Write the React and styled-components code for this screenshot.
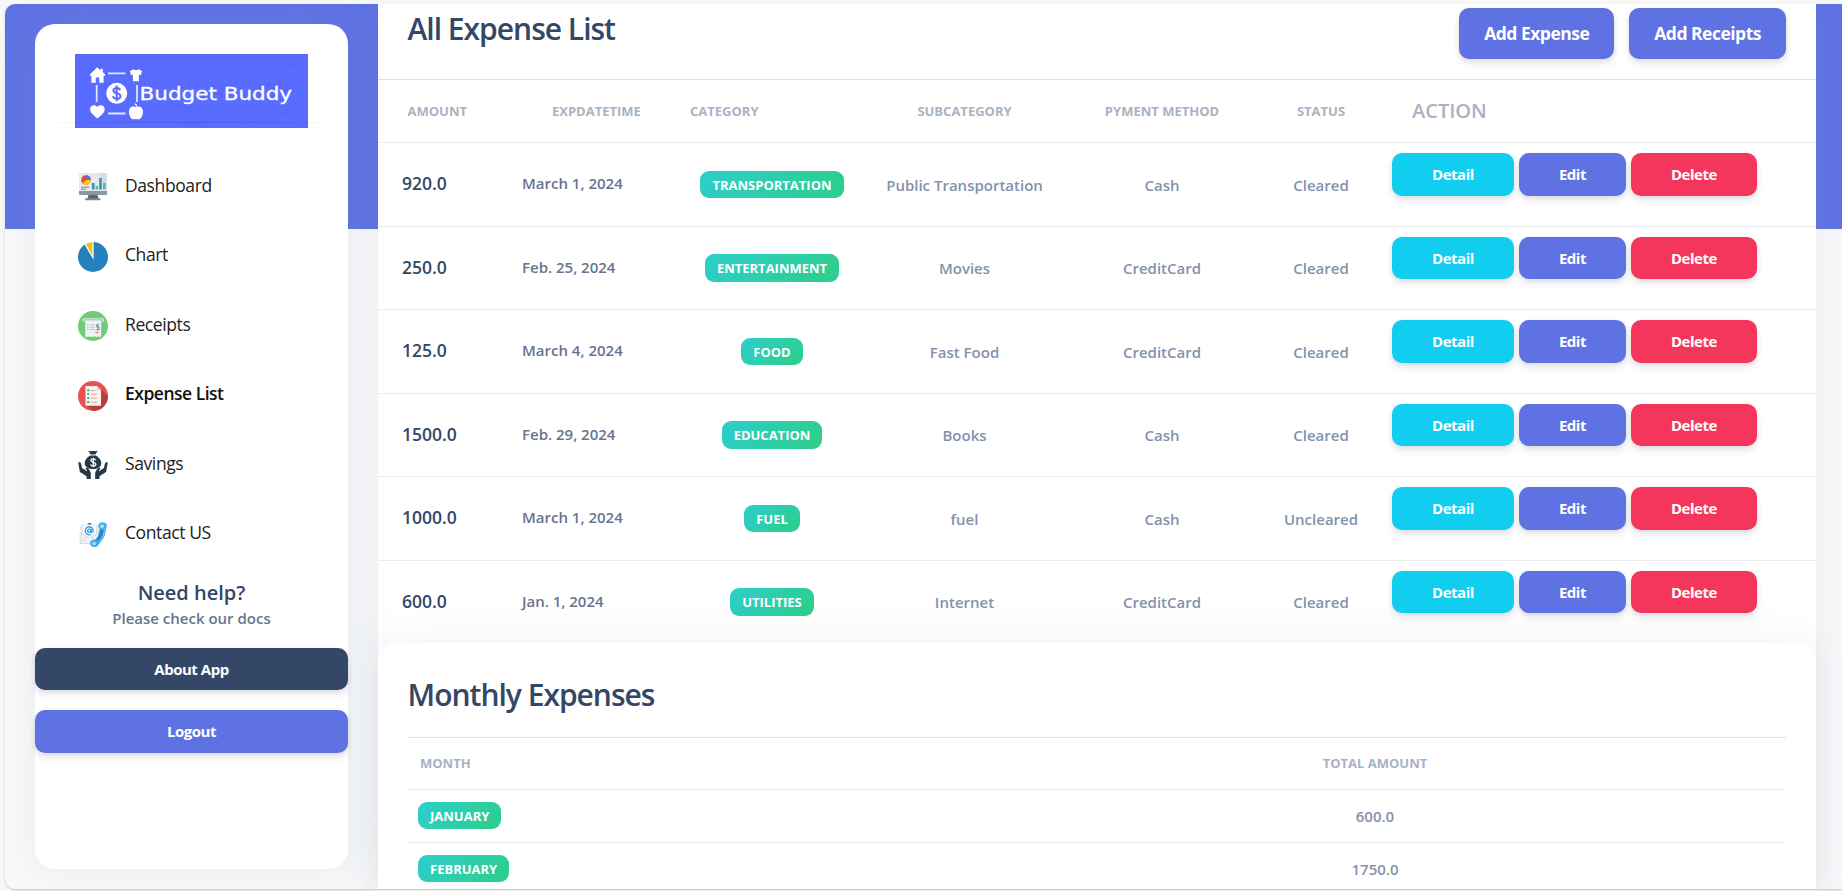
import React from "react";
import styled, { createGlobalStyle } from "styled-components";

const GlobalStyle = createGlobalStyle`
  *, *::before, *::after { box-sizing: border-box; }
  body {
    margin: 0;
    background: #f7f7f7;
    font-family: "Open Sans", "Noto Sans", sans-serif;
    overflow: hidden;
  }
`;

const Page = styled.div`
  height: 891px;
  padding: 4px 0 2px 5px;
`;

const Frame = styled.div`
  height: 885px;
  display: flex;
  gap: 30px;
  padding-left: 30px;
  overflow: hidden;
  border-radius: 10px 0 0 10px;
  background: linear-gradient(#5e72e4 225px, #f8f9fa 225px);
  box-shadow: 0 1px 2px rgba(0, 0, 0, 0.22);
`;

const Sidebar = styled.aside`
  position: relative;
  z-index: 1;
  flex: none;
  width: 313px;
  height: 845px;
  margin-top: 20px;
  padding-top: 30px;
  border-radius: 20px;
  background: #fff;
  box-shadow: 0 0 40px rgba(136, 152, 170, 0.15);
`;

const LogoBox = styled.div`
  width: 233px;
  height: 74px;
  margin: 0 auto;
  svg { display: block; }
`;

const Divider = styled.div`
  position: relative;
  height: 1px;
  margin-top: -6px;
  background: linear-gradient(90deg, transparent, rgba(0, 0, 0, 0.16), transparent);
`;

const Nav = styled.nav`
  margin-top: 26.75px;
  padding-bottom: 1px;
`;

const NavItem = styled.a`
  display: flex;
  align-items: center;
  gap: 17px;
  height: 69.5px;
  padding-left: 43px;
  font-size: 17.5px;
  letter-spacing: ${(p) => (p.$active ? "-0.5px" : "-0.4px")};
  font-weight: ${(p) => (p.$active ? 600 : 380)};
  color: ${(p) => (p.$active ? "#111" : "#222")};
  svg { flex: none; margin-top: 5px; }
`;

const Help = styled.div`
  padding: 12.5px 0 17.5px;
  text-align: center;
`;

const HelpTitle = styled.div`
  font-size: 20px;
  line-height: 25px;
  font-weight: 600;
  color: #344767;
`;

const HelpText = styled.div`
  margin-top: 1px;
  font-size: 15px;
  line-height: 24px;
  font-weight: 600;
  color: #67748e;
`;

const tones = { primary: "#5e72e4", info: "#11cdef", danger: "#f5365c", dark: "#344767" };

const Button = styled.button`
  display: block;
  width: ${(p) => (p.$block ? "100%" : "auto")};
  margin: 0;
  border: 0;
  border-radius: 10px;
  padding: ${(p) => (p.$large ? "11.5px 25px 13.5px" : "10px 40px")};
  font-family: inherit;
  font-size: ${(p) => (p.$large ? "17.5px" : "15px")};
  line-height: 1.5;
  font-weight: 700;
  letter-spacing: ${(p) => (p.$large ? "-0.5px" : "-0.47px")};
  white-space: nowrap;
  color: #fff;
  background: ${(p) => tones[p.$tone]};
  box-shadow: 0 5px 7.5px rgba(50, 50, 93, 0.1), 0 1px 4px rgba(0, 0, 0, 0.08);
`;

const SideActions = styled.div`
  display: grid;
  gap: 20px;
`;

const Main = styled.main`
  flex: none;
  width: 1438px;
  background: #fff;
  box-shadow: 0 0 40px rgba(136, 152, 170, 0.12);
`;

const CardHeader = styled.header`
  display: flex;
  align-items: flex-start;
  justify-content: space-between;
  height: 75px;
  padding: 4px 30px 0;
`;

const HeaderActions = styled.div`
  display: flex;
  gap: 15px;
`;

const Title = styled.h4`
  margin: 0 0 0 -0.5px;
  font-size: 30px;
  line-height: 41px;
  font-weight: 600;
  letter-spacing: -1px;
  color: #344767;
`;

const Row = styled.div`
  display: grid;
  grid-template-columns: 144px 146px 208px 177px 218px 100px 1fr;
  align-items: center;
  height: ${(p) => (p.$last ? "82.5px" : "83.5px")};
  border-bottom: ${(p) => (p.$last ? "0" : "1px solid #e9ecef")};
`;

const HeadRow = styled(Row)`
  height: 64px;
  border-top: 1px solid #dee2e6;
`;

const HeadCell = styled.div`
  padding-left: ${(p) => p.$inset || 0}px;
  padding-bottom: 1px;
  text-align: ${(p) => (p.$center ? "center" : "left")};
  font-size: ${(p) => (p.$big ? 20 : 13)}px;
  font-weight: ${(p) => (p.$big ? 600 : 700)};
  text-transform: uppercase;
  white-space: nowrap;
  color: #8392ab;
  opacity: 0.7;
`;

const Amount = styled.div`
  padding: 0 0 2px 24px;
  font-size: 17.5px;
  font-weight: 600;
  color: #344767;
`;

const DateCell = styled.div`
  padding-bottom: 2px;
  font-size: 15px;
  font-weight: 600;
  color: #67748e;
`;

const CenterCell = styled.div`
  padding-top: 0.5px;
  text-align: center;
  font-size: 15px;
  line-height: 22px;
  font-weight: 600;
  white-space: nowrap;
  color: #8392ab;
`;

const Badge = styled.span`
  display: inline-block;
  height: 27.5px;
  padding: 0 12px;
  border-radius: 9px;
  font-size: 13px;
  line-height: 28px;
  font-weight: 700;
  text-transform: uppercase;
  color: #fff;
  background: linear-gradient(310deg, #2dce89, #2dcecc);
`;

const Actions = styled.div`
  display: flex;
  align-self: start;
  gap: 5px;
  padding: 10px 0 0 21px;
`;

const MonthlyCard = styled.section`
  position: relative;
  height: 260px;
  padding: 30.5px 30px 0;
  border-radius: 20px 20px 0 0;
  background: #fff;
  box-shadow: 0 0 40px rgba(136, 152, 170, 0.15);
`;

const MonthRow = styled.div`
  display: grid;
  grid-template-columns: 556px 1fr;
  align-items: center;
  height: 53px;
  padding: 0 10px;
  border-bottom: 1px solid #e9ecef;
`;

const MonthHead = styled(MonthRow)`
  margin-top: 22px;
  border-top: 1px solid #dee2e6;
`;

const watermarkColumns = [22, 62, 102, 142, 182, 212];
const watermarkRows = [14, 36, 58];

const LogoMark = () => (
  <svg width="233" height="74" viewBox="0 0 233 74">
    <rect width="233" height="74" fill="#596cff" />
    <g fill="#20309a" opacity="0.06" fontFamily="Open Sans, sans-serif" fontSize="6.5" fontWeight="700">
      {watermarkRows.map((y) =>
        watermarkColumns.map((x) => (
          <text key={`${x}-${y}`} x={x} y={y + 2} textAnchor="middle" transform={`rotate(-28 ${x} ${y})`}>turbologo</text>
        ))
      )}
    </g>
    <g fill="#fff">
      <path d="M22.3 13.3 15 20.3v1.5h1.4v7h4.3v-5.2h3.6v5.2h4.3v-7H30v-1.5l-2.2-2v-3.5h-2.3v1.6z" />
      <path d="M58.5 15.3c1.6 1.4 3.6 1.4 5.1 0l3.4 1.8-1.1 4.1-2 -.6v6.6h-6v-6.6l-1.9.6-1.1-4.1z" />
      <path d="M22.4 64.5c-3.3-2.6-7.3-5.5-7.3-9.2 0-4.4 5.1-5.5 7.3-2.3 2.2-3.2 7.3-2.1 7.3 2.3 0 3.7-4 6.6-7.3 9.2z" />
      <path d="M61 53.2c1.4-1.1 7-1.4 7 4.7 0 3.6-2.1 7.4-4.4 7.4-1 0-1.6-.4-2.6-.4s-1.7.4-2.6.4c-2.4 0-4.4-3.8-4.4-7.4 0-6.1 5.7-5.8 7-4.7z" />
      <path d="M60 49.8c1.2.5 1.6 1.4 1.5 2.8" stroke="#fff" strokeWidth="1.2" />
      <circle cx="41.7" cy="39.3" r="10.5" />
    </g>
    <path d="M33 19.3h17.5M33 59.5h17.5M21.7 31v17M62 31v17" stroke="#fff" strokeOpacity=".82" strokeWidth="1.8" />
    <path d="M41.7 31.5v15.8M45.2 36.2c-.5-1.7-1.8-2.3-3.4-2.3-2 0-3.4 1-3.4 2.6 0 3.9 7.1 1.7 7.1 5.7 0 1.7-1.6 2.7-3.7 2.7-1.8 0-3.3-.8-3.8-2.6" fill="none" stroke="#596cff" strokeWidth="2" />
    <text x="64.6" y="46" textLength="152.5" lengthAdjust="spacingAndGlyphs" fontFamily="DejaVu Sans, sans-serif" fontSize="18.5" fill="#fff" stroke="#fff" strokeWidth=".3">Budget Buddy</text>
  </svg>
);

const Icon = ({ children }) => (
  <svg width="30" height="30" viewBox="0 0 30 30">{children}</svg>
);

const DashboardIcon = () => (
  <Icon>
    <path d="M10.5 23h9l1.2 4H9.300z" fill="#5d6672" />
    <rect x="7.2" y="26.2" width="15.4" height="2" rx=".8" fill="#7c8591" />
    <rect x="1" y="1" width="28" height="20" rx="1" fill="#e4e9ee" />
    <path d="M20 1h8a1 1 0 0 1 1 1v17z" fill="#d7dde4" />
    <path d="M1 19h28v3a1 1 0 0 1-1 1H2a1 1 0 0 1-1-1z" fill="#8d97a3" />
    <circle cx="8" cy="8" r="4.8" fill="#e2503c" />
    <path d="M8 8V3.2A4.8 4.8 0 0 1 12.8 8z" fill="#5b6ee8" />
    <path d="M8 8h4.8A4.8 4.8 0 0 1 4.6 11.4z" fill="#fc0" />
    <path d="M3 15.3h8M3 17.3h5" stroke="#6c7df0" strokeWidth="1" />
    <path d="M15.2 11v6.500M22.5 6v11.500" stroke="#3f8fb5" strokeWidth="2.6" />
    <path d="M18.9 14v3.500M26.2 11v6.500" stroke="#4bbf9c" strokeWidth="2.6" />
  </Icon>
);

const ChartIcon = () => (
  <Icon>
    <circle cx="15" cy="15" r="15" fill="#2580bd" />
    <path d="M15.6 18V-1H4L6.6 2.500z" fill="#fff" />
    <path d="M14.3 13.8V.2c-2.3 0-4.6.6-6.5 1.6z" fill="#eec315" />
  </Icon>
);

const ReceiptIcon = () => (
  <Icon>
    <circle cx="15" cy="15" r="15" fill="#6fcb77" />
    <rect x="4.5" y="7.3" width="21.5" height="3.4" rx="1.5" fill="#dce5e5" />
    <path d="M6 9.2h18.5" stroke="#6d7c83" strokeWidth=".9" />
    <path d="M7.2 9.2h16v16l-1.6 1-1.6-1-1.6 1-1.6-1-1.6 1-1.6-1-1.6 1-1.6-1-1.6 1-1.6-1z" fill="#edf2f2" />
    <path d="M9.2 14h1.5M9.2 16.3h1.5M9.2 18.5h1.5M11.7 14h5M11.7 16.3h5M11.7 18.5h5" stroke="#b7c5c9" strokeWidth="1" />
    <path d="M21.3 13.8h-2.7v2.3h2.6v2.5h-2.9M19.9 12.7v7" fill="none" stroke="#829399" strokeWidth="1" />
    <path d="M17.3 21.5h3.5" stroke="#ef7f7d" strokeWidth="1.2" />
  </Icon>
);

const ListIcon = () => (
  <Icon>
    <circle cx="15" cy="15" r="15" fill="#e9504f" />
    <path d="M22.5 8 30 15.2A15 15 0 0 1 15 30l-7-5.5z" fill="#b93d40" />
    <path d="M7.5 5h11.5l4 4v15.8H7.5z" fill="#f5f4f1" />
    <path d="M19 5v4h4z" fill="#d5d0ca" />
    <path d="M9.2 9.2h1.9M9.2 13h1.9M9.2 17h1.9M9.2 21h1.9" stroke="#1fb98a" strokeWidth="2" />
    <path d="M12.5 9.5h5M12.5 13.2h6.7M12.5 17.2h6.7M12.5 21.2h6.7" stroke="#f0a19b" strokeWidth="1.1" />
  </Icon>
);

const SavingsIcon = () => (
  <Icon>
    <g fill="#263844">
      <path d="M10.3.8c2 .8 3 .3 4.7.3s2.7.5 4.7-.3l-2.3 3.6h-4.8z" />
      <path d="M12.3 5.5h5.4c3.5 1.8 5.6 4.7 5.6 7.7 0 3.9-3.5 5.8-8.3 5.8s-8.3-1.9-8.3-5.8c0-3 2.1-5.9 5.6-7.7z" />
      <path d="M.2 12.5c1.3-.7 2.5 0 2.9 1.3l1 4.2 4.9 3.3c.8-.8-2-2.5-1.2-3.4 1.6-.8 4.6 2.3 5 5.3V29H8.6v-2.7L1.9 22z" />
      <path d="M29.8 12.5c-1.3-.7-2.5 0-2.9 1.3l-1 4.2-4.9 3.3c-.8-.8 2-2.5 1.2-3.4-1.6-.8-4.6 2.3-5 5.3V29h4.2v-2.7l6.7-4.3z" />
    </g>
    <path d="M17.7 10.3c-.4-1.1-1.3-1.4-2.4-1.4-1.4 0-2.4.6-2.4 1.7 0 2.5 5 1.2 5 3.7 0 1.2-1.1 1.8-2.6 1.8-1.3 0-2.3-.5-2.6-1.7M15.3 7.7v9.6" fill="none" stroke="#fff" strokeWidth="1.3" />
  </Icon>
);

const ContactIcon = () => (
  <Icon>
    <rect x="2" y="5.5" width="19" height="18" rx="1" fill="#e8eaec" />
    <path d="M4.5 5h14v11l-7 4-7-4z" fill="#f8fbfe" stroke="#ccd3da" strokeWidth=".5" />
    <path d="M2 12.5l9.5 5.5 9.5-5.5v11H2z" fill="#eef0f1" stroke="#c9cdd1" strokeWidth=".6" />
    <path d="M2.3 23.2l7-6.5M20.7 23.2l-7-6.5" stroke="#c9cdd1" strokeWidth=".6" />
    <path d="M9.7 4.5h3.6v-1.5H9.7z" fill="#656b70" />
    <circle cx="11.3" cy="10.7" r="1.7" fill="none" stroke="#1792df" strokeWidth="1.2" />
    <path d="M13 9v2.5c.2 1.3 2 1 2.2-.8A4 4 0 1 0 12.8 14.5" fill="none" stroke="#1792df" strokeWidth="1.1" />
    <path d="M27.3 3.5c2 6.5-.3 16.5-8.5 21.8l-3.3-3.8c4-3.3 5.8-6.8 6-12z" fill="#1d8cd3" />
    <path d="M26.6 8c.1 5.5-2.3 11-6.3 14" stroke="#74ccf6" strokeWidth="1.4" fill="none" />
    <ellipse cx="24.6" cy="6" rx="4.3" ry="3.7" fill="#47b1ec" />
    <ellipse cx="16.5" cy="23.3" rx="4.5" ry="3.8" fill="#3daaea" />
    <ellipse cx="24" cy="6.2" rx="2" ry="1.7" fill="#a3def9" />
    <ellipse cx="16" cy="23.5" rx="2.2" ry="1.7" fill="#9cdbf8" />
  </Icon>
);

const navItems = [
  ["Dashboard", DashboardIcon],
  ["Chart", ChartIcon],
  ["Receipts", ReceiptIcon],
  ["Expense List", ListIcon],
  ["Savings", SavingsIcon],
  ["Contact US", ContactIcon],
];

const expenses = [
  ["920.0", "March 1, 2024", "Transportation", "Public Transportation", "Cash", "Cleared"],
  ["250.0", "Feb. 25, 2024", "Entertainment", "Movies", "CreditCard", "Cleared"],
  ["125.0", "March 4, 2024", "Food", "Fast Food", "CreditCard", "Cleared"],
  ["1500.0", "Feb. 29, 2024", "Education", "Books", "Cash", "Cleared"],
  ["1000.0", "March 1, 2024", "Fuel", "fuel", "Cash", "Uncleared"],
  ["600.0", "Jan. 1, 2024", "Utilities", "Internet", "CreditCard", "Cleared"],
];

const months = [
  ["January", "600.0"],
  ["February", "1750.0"],
];

export default function App() {
  return (
    <Page>
      <GlobalStyle />
      <Frame>
        <Sidebar>
          <LogoBox><LogoMark /></LogoBox>
          <Divider />
          <Nav>
            {navItems.map(([label, Glyph]) => (
              <NavItem key={label} $active={label === "Expense List"}>
                <Glyph />
                {label}
              </NavItem>
            ))}
          </Nav>
          <Help>
            <HelpTitle>Need help?</HelpTitle>
            <HelpText>Please check our docs</HelpText>
          </Help>
          <SideActions>
            <Button $block $tone="dark">About App</Button>
            <Button $block $tone="primary">Logout</Button>
          </SideActions>
        </Sidebar>
        <Main>
          <CardHeader>
            <Title>All Expense List</Title>
            <HeaderActions>
              <Button $large $tone="primary">Add Expense</Button>
              <Button $large $tone="primary">Add Receipts</Button>
            </HeaderActions>
          </CardHeader>
          <HeadRow>
            <HeadCell $inset={29.5}>Amount</HeadCell>
            <HeadCell $inset={30}>ExpDateTime</HeadCell>
            <HeadCell $inset={22}>Category</HeadCell>
            <HeadCell $center>Subcategory</HeadCell>
            <HeadCell $center>Pyment Method</HeadCell>
            <HeadCell $center>Status</HeadCell>
            <HeadCell $big $inset={41}>Action</HeadCell>
          </HeadRow>
          {expenses.map(([amount, date, category, sub, method, status], i) => (
            <Row key={i} $last={i === expenses.length - 1}>
              <Amount>{amount}</Amount>
              <DateCell>{date}</DateCell>
              <CenterCell><Badge>{category}</Badge></CenterCell>
              <CenterCell>{sub}</CenterCell>
              <CenterCell>{method}</CenterCell>
              <CenterCell>{status}</CenterCell>
              <Actions>
                <Button $tone="info">Detail</Button>
                <Button $tone="primary">Edit</Button>
                <Button $tone="danger">Delete</Button>
              </Actions>
            </Row>
          ))}
          <MonthlyCard>
            <Title>Monthly Expenses</Title>
            <MonthHead>
              <HeadCell $inset={2}>Month</HeadCell>
              <HeadCell $center>Total Amount</HeadCell>
            </MonthHead>
            {months.map(([month, total]) => (
              <MonthRow key={month}>
                <div><Badge>{month}</Badge></div>
                <CenterCell>{total}</CenterCell>
              </MonthRow>
            ))}
          </MonthlyCard>
        </Main>
      </Frame>
    </Page>
  );
}
